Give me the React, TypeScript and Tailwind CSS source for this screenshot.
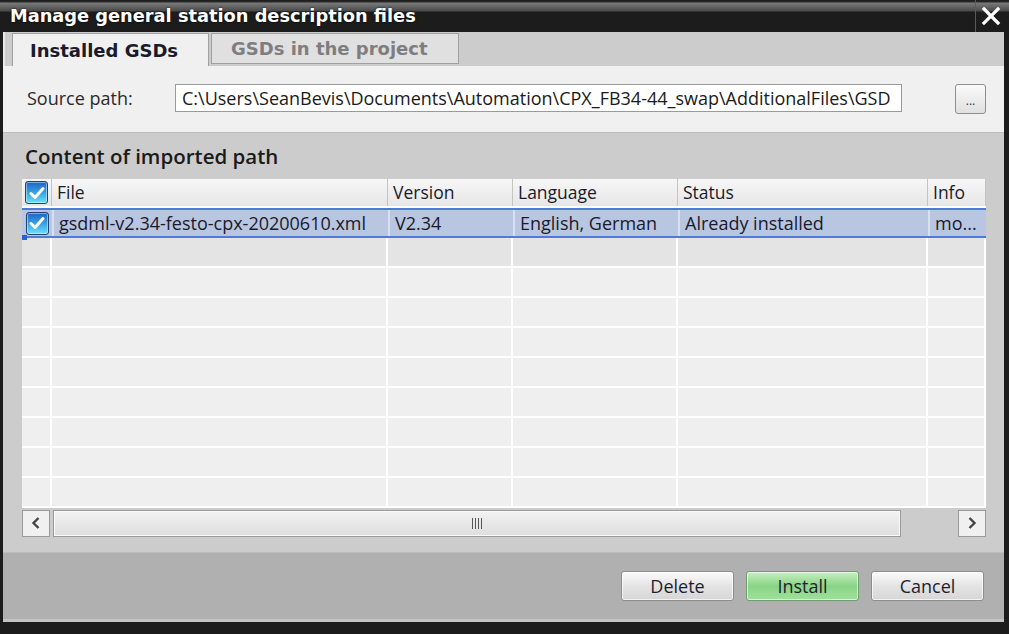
import React from 'react';

const COLS = [
  { id: 'chk', w: 'w-[30px]' },
  { id: 'file', w: 'w-[336px]', label: 'File' },
  { id: 'ver', w: 'w-[125px]', label: 'Version' },
  { id: 'lang', w: 'w-[165px]', label: 'Language' },
  { id: 'status', w: 'w-[250px]', label: 'Status' },
  { id: 'info', w: 'flex-1', label: 'Info' },
];

function CheckBox() {
  return (
    <div className="w-[23px] h-[23px] rounded-[3px] border border-[#23406f] bg-[linear-gradient(to_bottom,#1f62c4,#3aa8e8_55%,#6fe0fa)] flex items-center justify-center shadow-[inset_0_0_0_1px_rgba(255,255,255,0.45)]">
      <svg width="16" height="14" viewBox="0 0 16 14">
        <path d="M2 7.5 L6 11.5 L14 2.5" fill="none" stroke="#ffffff" strokeWidth="3" strokeLinecap="round" strokeLinejoin="round" />
      </svg>
    </div>
  );
}

function FooterButton({ label, green }: { label: string; green?: boolean }) {
  return (
    <button
      className={
        green
          ? 'w-[113px] h-[30px] rounded-[3px] border border-[#6f9f6f] bg-[linear-gradient(to_bottom,#c6f0c0,#8ad486_50%,#9fe09a)] text-[18px] text-[#1e1e2e] shadow-[inset_0_0_0_1px_rgba(255,255,255,0.6)]'
          : 'w-[113px] h-[30px] rounded-[3px] border border-[#8e8e8e] bg-[linear-gradient(to_bottom,#fbfbfb,#e4e4e4_50%,#d6d6d6)] text-[18px] text-[#1e1e2e] shadow-[inset_0_0_0_1px_rgba(255,255,255,0.7)]'
      }
    >
      {label}
    </button>
  );
}

export default function App() {
  const emptyRows = Array.from({ length: 9 }, (_, i) => i);

  return (
    <div className="w-[1009px] h-[634px] bg-[#1c1c1c] overflow-hidden flex flex-col font-['Open_Sans',sans-serif]">
      {/* Title bar */}
      <div className="h-[32px] flex bg-[linear-gradient(to_bottom,#1c1c1c_0px,#2a2a2a_2px,#7a7a7a_3px,#4a4a4a_11px,#1c1c1c_12px,#1c1c1c_100%)]">
        <div className="flex-1 pl-[10px] pt-[3px] text-white text-[17.8px] font-bold font-['DejaVu_Sans',sans-serif] [text-shadow:0_0_2px_#000]">
          Manage general station description files
        </div>
        <div className="w-[30px] border-l border-[#5a5a5a] flex items-center justify-center mr-[4px]">
          <svg width="20" height="20" viewBox="0 0 20 20">
            <path d="M3 3 L17 17 M17 3 L3 17" stroke="#ffffff" strokeWidth="3.2" strokeLinecap="square" />
          </svg>
        </div>
      </div>

      {/* Dialog body */}
      <div className="ml-[3px] w-[1001px] flex flex-col">
        {/* Tabs */}
        <div className="h-[34px] bg-[#cccccc] flex items-end pl-[7px] border-l-[2px] border-[#e8e8e8]">
          <div className="w-[197px] h-[33px] bg-[#f0f0f0] border-l border-t border-r border-[#a0a0a0] flex items-center pl-[17px] text-[18px] font-bold text-[#1a1a2a] font-['DejaVu_Sans',sans-serif]">
            Installed GSDs
          </div>
          <div className="ml-[2px] mb-[2px] w-[248px] h-[31px] bg-[#e0e0e0] border border-[#a0a0a0] flex items-center pl-[19px] text-[18px] font-bold text-[#7e7e80] font-['DejaVu_Sans',sans-serif]">
            GSDs in the project
          </div>
        </div>

        {/* Source path */}
        <div className="h-[66px] bg-[#f0f0f0] flex items-center pl-[24px] pr-[18px]">
          <span className="w-[148px] text-[18px] text-[#2a2a2a] -mt-[2px]">Source path:</span>
          <div className="w-[727px] h-[28px] bg-white border border-[#9a9a9a] flex items-center px-[6px] -mt-[2px] text-[18px] text-[#1a1a1a] whitespace-nowrap overflow-hidden">
            C:\Users\SeanBevis\Documents\Automation\CPX_FB34-44_swap\AdditionalFiles\GSD
          </div>
          <div className="ml-auto w-[31px] h-[30px] rounded-[3px] border border-[#8e8e8e] bg-[linear-gradient(to_bottom,#fafafa,#e0e0e0)] flex items-end justify-center pb-[6px] text-[12px] leading-none text-[#333]">
            ...
          </div>
        </div>

        {/* Content of imported path */}
        <div className="h-[420px] bg-[#cccccc] border-t border-[#bdbdbd] flex flex-col px-[19px]">
          <div className="h-[46px] flex items-center pl-[3px] text-[20.5px] font-semibold text-[#1a1a1a]">
            Content of imported path
          </div>

          {/* Table */}
          <div className="w-[964px] flex flex-col">
            {/* Header */}
            <div className="h-[29px] flex bg-[linear-gradient(to_bottom,#f7f7f7,#e6e6e6)] border-b-[2px] border-white">
              {COLS.map((c) => (
                <div
                  key={c.id}
                  className={`${c.w} h-full border-r border-[#c4c4c4] flex items-center ${c.id === 'chk' ? 'justify-center' : 'pl-[5px]'} text-[17.5px] text-[#1a1a2a]`}
                >
                  {c.id === 'chk' ? <CheckBox /> : c.label}
                </div>
              ))}
            </div>

            {/* Selected row */}
            <div className="relative h-[30px] flex bg-[#b9c6e2] border-t-[2px] border-b-[2px] border-[#4f7bd6] text-[18px] text-[#1a1a2a]">
              <div className="w-[30px] flex items-center justify-center">
                <CheckBox />
              </div>
              <div className="w-[336px] border-l-[2px] border-[#d8e0f0] flex items-center pl-[5px]">
                gsdml-v2.34-festo-cpx-20200610.xml
              </div>
              <div className="w-[125px] border-l-[2px] border-[#d8e0f0] flex items-center pl-[5px]">V2.34</div>
              <div className="w-[165px] border-l-[2px] border-[#d8e0f0] flex items-center pl-[5px]">English, German</div>
              <div className="w-[250px] border-l-[2px] border-[#d8e0f0] flex items-center pl-[5px]">Already installed</div>
              <div className="flex-1 border-l-[2px] border-[#d8e0f0] flex items-center pl-[5px]">mo...</div>
              <div className="absolute left-0 -bottom-[4px] w-[5px] h-[5px] bg-[#2e5fd0]" />
            </div>

            {/* Empty rows */}
            {emptyRows.map((r) => (
              <div
                key={`row-${r}`}
                className={`h-[30px] flex border-b-[2px] border-white ${r === 0 ? 'bg-[#e4e4e4]' : 'bg-[#efefef]'}`}
              >
                {COLS.map((c) => (
                  <div key={c.id} className={`${c.w} h-full border-r-[2px] border-white`} />
                ))}
              </div>
            ))}
          </div>

          {/* Horizontal scrollbar */}
          <div className="w-[964px] h-[28px] mt-[1px] flex items-center">
            <div className="w-[28px] h-[27px] border border-[#9a9a9a] bg-[#f0f0f0] flex items-center justify-center">
              <svg width="10" height="14" viewBox="0 0 10 14">
                <path d="M7.5 2 L2.5 7 L7.5 12" fill="none" stroke="#444" strokeWidth="2.4" />
              </svg>
            </div>
            <div className="ml-[3px] w-[848px] h-[27px] border border-[#9a9a9a] bg-[linear-gradient(to_bottom,#f2f2f2,#dedede)] shadow-[inset_0_0_0_1px_#fafafa] flex items-center justify-center">
              <div className="flex gap-[2px]">
                <div className="w-[1px] h-[11px] bg-[#555]" />
                <div className="w-[1px] h-[11px] bg-[#555]" />
                <div className="w-[1px] h-[11px] bg-[#555]" />
                <div className="w-[1px] h-[11px] bg-[#555]" />
              </div>
            </div>
            <div className="flex-1" />
            <div className="w-[28px] h-[27px] border border-[#9a9a9a] bg-[#f0f0f0] flex items-center justify-center">
              <svg width="10" height="14" viewBox="0 0 10 14">
                <path d="M2.5 2 L7.5 7 L2.5 12" fill="none" stroke="#444" strokeWidth="2.4" />
              </svg>
            </div>
          </div>
        </div>

        {/* Footer */}
        <div className="h-[70px] bg-[#b0b0b0] border-t border-[#bcbcbc] flex items-start justify-end gap-[12px] pt-[18px] pr-[20px] border-b-[3px] border-b-[#c4c4c4]">
          <FooterButton label="Delete" />
          <FooterButton label="Install" green />
          <FooterButton label="Cancel" />
        </div>
      </div>
    </div>
  );
}
